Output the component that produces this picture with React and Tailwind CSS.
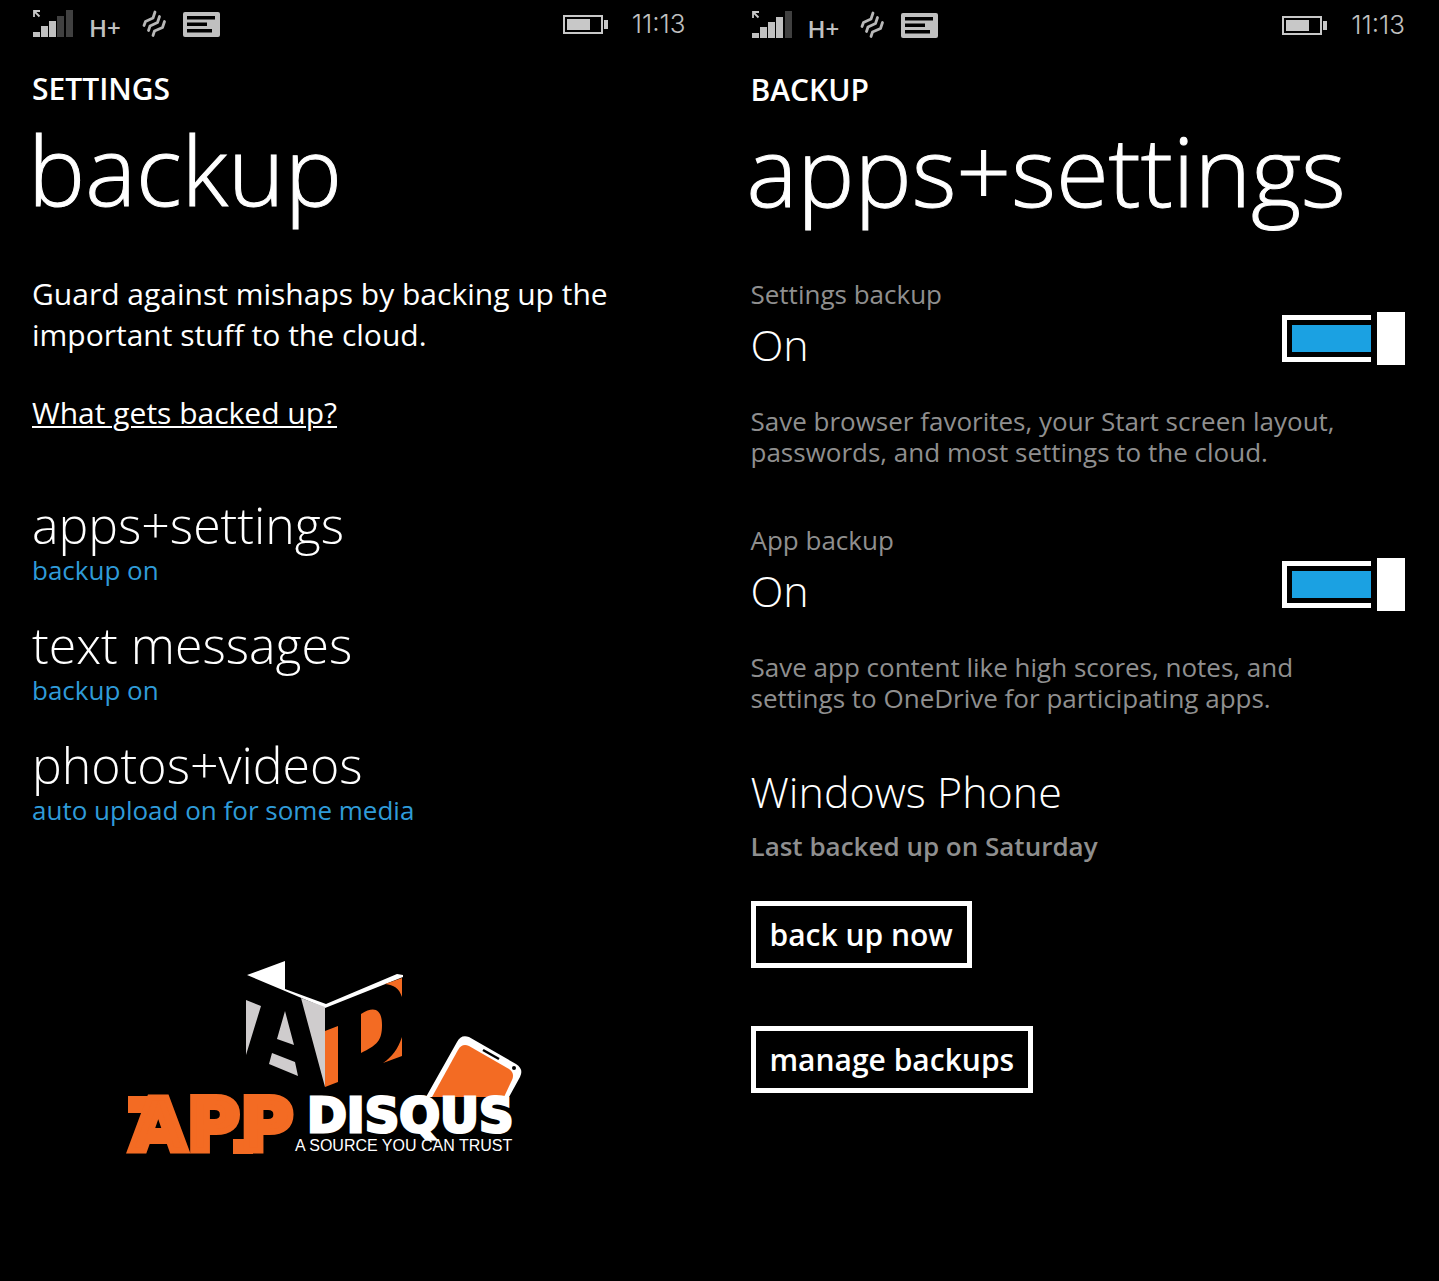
import React, { useId, useState } from "react";

function SignalIcon({ bars }) {
  return (
    <svg width="41" height="29" viewBox="0 0 41 29" className="shrink-0" aria-hidden="true">
      <path d="M2 7V1h6M2 1L7.500 6.500" fill="none" stroke="#c8c8c8" strokeWidth="1.800" />
      {[
        [1, 22, 5],
        [9, 16, 11],
        [17, 11, 16],
        [25, 6, 21],
        [34, 0, 27],
      ].map(([x, y, h], i) => (
        <rect key={x} x={x} y={y} width="7" height={h} fill={i < bars ? "#c0c0c0" : "#404040"} />
      ))}
    </svg>
  );
}

function VibrateIcon() {
  return (
    <svg width="26" height="28" viewBox="0 0 26 28" className="shrink-0" aria-hidden="true">
      <g fill="none" stroke="#b8b8b8" strokeWidth="2.800" strokeLinecap="round" strokeLinejoin="round">
        <path d="M3 15.500l1.500-4 7.500-3.500 2-6" />
        <path d="M7.500 20.500l1.500-4.500 7.500-3.500 2-6" />
        <path d="M12 25.500l1.500-4.500 8-3.500 2-6" />
      </g>
    </svg>
  );
}

function MessageIcon() {
  return (
    <svg width="37" height="25" viewBox="0 0 37 25" className="shrink-0" aria-hidden="true">
      <rect width="37" height="25" rx="2" fill="#c0c0c0" />
      <path d="M4 4h28v3.500H4zM4 10.500h20v3.500H4zM4 17h25v3.500H4z" fill="#000" />
    </svg>
  );
}

function BatteryIcon() {
  return (
    <svg width="45" height="19" viewBox="0 0 45 19" className="shrink-0" aria-hidden="true">
      <rect x="1" y="1" width="38" height="17" fill="none" stroke="#c8c8c8" strokeWidth="2" />
      <rect x="4" y="4" width="23" height="11" fill="#c8c8c8" />
      <rect x="41" y="5" width="4" height="9" fill="#c8c8c8" />
    </svg>
  );
}

function StatusBar({ bars }) {
  return (
    <div className="flex h-8 items-center text-[#c0c0c0]">
      <SignalIcon bars={bars} />
      <span className="ml-4 mt-2 text-[24px] leading-6 font-semibold">H+</span>
      <span className="ml-5">
        <VibrateIcon />
      </span>
      <span className="ml-4">
        <MessageIcon />
      </span>
      <span className="ml-auto">
        <BatteryIcon />
      </span>
      <span className="ml-6 font-['Inter',sans-serif] text-[26px] leading-8 font-light">11:13</span>
    </div>
  );
}

function PageHeader({ section, title }) {
  return (
    <header>
      <h2 className="mt-[29px] text-[30px] leading-10 font-semibold">{section}</h2>
      <h1 className="-ml-1 text-[96px] leading-[120px] font-light [-webkit-text-stroke:1px]">{title}</h1>
    </header>
  );
}

function BackupItem({ title, status }) {
  return (
    <li>
      <a href="#" className="block">
        <span className="block text-[50px] leading-[60px] font-light">{title}</span>
        <span className="mt-px block text-[26px] leading-7 text-[#2f9bd8]">{status}</span>
      </a>
    </li>
  );
}

function ToggleSetting({ label, description }) {
  const id = useId();
  const [on, setOn] = useState(true);
  return (
    <div>
      <label htmlFor={id} className="block text-[26px] leading-8 text-[#8f8f8f]">
        {label}
      </label>
      <div className="flex items-start justify-between">
        <span className="mt-[5px] text-[43px] leading-[60px] font-light">{on ? "On" : "Off"}</span>
        <button
          id={id}
          type="button"
          role="switch"
          aria-checked={on}
          onClick={() => setOn(!on)}
          className={on ? "mt-0.5 flex items-center gap-1.5" : "mt-0.5 flex flex-row-reverse items-center gap-1.5"}
        >
          <span className="block h-[47px] w-[89px] border-[5px] border-r-0 border-white py-[5px] pl-[5px]">
            <span className={on ? "block h-full bg-[#1ba1e2]" : "block h-full bg-black"} />
          </span>
          <span className="block h-[53px] w-7 bg-white" />
        </button>
      </div>
      <p className="mt-[31px] text-[26px] leading-[31px] text-[#8f8f8f]">{description}</p>
    </div>
  );
}

function OutlineButton({ children }) {
  return (
    <button type="button" className="h-[67px] border-[5px] border-white px-3.5 text-[30px] leading-8 font-semibold">
      {children}
    </button>
  );
}

function AppDisqusLogo() {
  return (
    <svg
      width="398"
      height="196"
      viewBox="126 960 398 196"
      className="overflow-visible"
      role="img"
      aria-label="AppDisqus, a source you can trust"
    >
      <path d="M247 975l38-14v28l41 15 71-30 6 1v2l-78 31-40-17z" fill="#fff" />
      <path d="M246 1000l15 6-15 49z M285 1011l9 34-17-6z M272 1053l23 9 3 14-29-12z M301 998l24 9v80z" fill="#cfcccd" />
      <path
        d="M325 1031l13-5v56l-13 5z M361 1014c14-9 21-4 21 11 0 16-5 20-21 28z M385 984l17-6v19c-3-9-8-12-17-13z M402 1037v19l-19 7c9-6 15-14 19-26z"
        fill="#f36b23"
      />
      <path d="M426 1097l31-55q4-8 12-5l47 27q8 5 4 13l-11 20z" fill="#fff" />
      <path d="M432 1097l26-47q4-7 11-4l40 23q6 4 3 11l-8 17z" fill="#f36b23" />
      <path d="M483 1050l16 9" stroke="#000" strokeWidth="2.500" />
      <circle cx="514" cy="1068" r="2" fill="#000" />
      <path d="M128 1096h38v17h-38z M233 1139h20v15h-20z" fill="#f36b23" />
      <g fontFamily="'DejaVu Sans', sans-serif" fontWeight="700" strokeLinejoin="miter">
        <text x="130" y="1151" fill="#f36b23" stroke="#f36b23" strokeWidth="6" fontSize="73">
          APP
        </text>
        <text x="307" y="1132" fill="#fff" stroke="#fff" strokeWidth="3" fontSize="48">
          DISQUS
        </text>
      </g>
      <text x="295" y="1151" fill="#fff" fontSize="16" fontFamily="'Liberation Sans', Arial, sans-serif">
        A SOURCE YOU CAN TRUST
      </text>
    </svg>
  );
}

export default function App() {
  return (
    <main className="grid min-h-screen grid-cols-2 bg-black font-['Open_Sans','Noto_Sans',sans-serif] text-white">
      <section className="pt-2 pr-[34px] pl-8">
        <StatusBar bars={3} />
        <PageHeader section="SETTINGS" title="backup" />
        <p className="mt-11 text-[30px] leading-[41px]">
          Guard against mishaps by backing up the
          <br />
          important stuff to the cloud.
        </p>
        <a href="#" className="mt-[38px] inline-block text-[30px] leading-10 underline decoration-2 underline-offset-2">
          What gets backed up?
        </a>
        <ul className="mt-[62px] flex flex-col gap-[31px]">
          <BackupItem title="apps+settings" status="backup on" />
          <BackupItem title="text messages" status="backup on" />
          <BackupItem title="photos+videos" status="auto upload on for some media" />
        </ul>
        <div className="mt-[136px] ml-[94px]">
          <AppDisqusLogo />
        </div>
      </section>
      <section className="pt-[9px] pr-[34px] pl-[31px]">
        <StatusBar bars={4} />
        <PageHeader section="BACKUP" title="apps+settings" />
        <div className="mt-12 flex flex-col gap-14">
          <ToggleSetting
            label="Settings backup"
            description={
              <>
                Save browser favorites, your Start screen layout,
                <br />
                passwords, and most settings to the cloud.
              </>
            }
          />
          <ToggleSetting
            label="App backup"
            description={
              <>
                Save app content like high scores, notes, and
                <br />
                settings to OneDrive for participating apps.
              </>
            }
          />
        </div>
        <h3 className="mt-12 text-[43px] leading-[60px] font-light">Windows Phone</h3>
        <p className="mt-1.5 text-[26px] leading-9 font-semibold text-[#8f8f8f]">Last backed up on Saturday</p>
        <div className="mt-[37px] flex flex-col items-start gap-[58px]">
          <OutlineButton>back up now</OutlineButton>
          <OutlineButton>manage backups</OutlineButton>
        </div>
      </section>
    </main>
  );
}
